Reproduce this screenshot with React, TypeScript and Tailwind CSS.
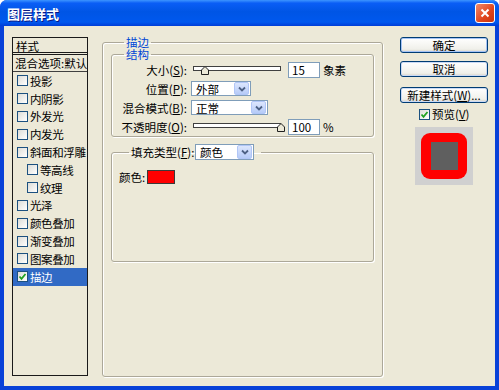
import React from "react";

const FONT = "font-['Noto_Sans_CJK_SC','Liberation_Sans',sans-serif]";

function CheckBox({ checked = false }: { checked?: boolean }) {
  return (
    <span className="w-[11px] h-[11px] shrink-0 border border-[#1c5180] bg-[linear-gradient(135deg,#dcdcd7,#ffffff)] flex items-center justify-center">
      {checked && (
        <svg width="9" height="9" viewBox="0 0 9 9">
          <polyline points="1.5,4.5 3.5,6.8 7.5,2" fill="none" stroke="#21a121" strokeWidth="1.8" />
        </svg>
      )}
    </span>
  );
}

function Dropdown({ value, w, h = 15 }: { value: string; w: string; h?: number }) {
  return (
    <div
      className={`${w} flex items-center bg-white border border-[#7f9db9] shrink-0`}
      style={{ height: h }}
    >
      <span className="flex-1 pl-[4px] leading-[12px] text-black">{value}</span>
      <span className="w-[15px] h-full mr-px border border-[#b1c6f7] rounded-[2px] bg-[linear-gradient(180deg,#dce6fd,#b6cbf8)] flex items-center justify-center">
        <svg width="8" height="6" viewBox="0 0 8 6">
          <polyline points="1,1.5 4,4.5 7,1.5" fill="none" stroke="#4d6185" strokeWidth="1.8" />
        </svg>
      </span>
    </div>
  );
}

function Slider({ pos }: { pos: number }) {
  return (
    <svg width="94" height="10" viewBox="0 0 94 10" className="shrink-0">
      <rect x="0.5" y="1.5" width="87" height="4" fill="#fff" stroke="#404040" />
      <polygon
        points={`${pos + 0.5},9.5 ${pos + 0.5},5 ${pos + 4},1.5 ${pos + 7.5},5 ${pos + 7.5},9.5`}
        fill="#ece9d8"
        stroke="#202020"
      />
    </svg>
  );
}

function TextBox({ value }: { value: string }) {
  return (
    <div className="w-[32px] h-[16px] ml-px bg-white border border-[#7f9db9] pl-[3px] leading-[14px] shrink-0">
      {value}
    </div>
  );
}

function XpButton({ children, focused = false }: { children: React.ReactNode; focused?: boolean }) {
  return (
    <div
      className={`h-[16px] w-[88px] rounded-[3px] border border-[#003c74] bg-[linear-gradient(180deg,#ffffff,#f0f0ea_80%,#d6d0c5)] flex items-center justify-center leading-[12px] text-black ${
        focused ? "shadow-[inset_0_0_0_1px_#a5c3f5]" : "shadow-[inset_0_0_0_1px_#cbdaf5]"
      }`}
    >
      {children}
    </div>
  );
}

const styles: { name: string; indent?: boolean; checked?: boolean; selected?: boolean }[] = [
  { name: "投影" },
  { name: "内阴影" },
  { name: "外发光" },
  { name: "内发光" },
  { name: "斜面和浮雕" },
  { name: "等高线", indent: true },
  { name: "纹理", indent: true },
  { name: "光泽" },
  { name: "颜色叠加" },
  { name: "渐变叠加" },
  { name: "图案叠加" },
  { name: "描边", checked: true, selected: true },
];

const groupBox =
  "border border-[#aca899] rounded-[3px] shadow-[inset_1px_1px_0_#ffffff,1px_1px_0_#ffffff]";

export default function App() {
  return (
    <div className={`${FONT} w-[499px] h-[390px] flex flex-col bg-[#0841d8] rounded-t-[7px] overflow-hidden`}>
      {/* title bar */}
      <div className="h-[26px] shrink-0 flex items-center justify-between pl-[7px] pr-[4px] bg-[linear-gradient(180deg,#3d95ff_0%,#0a5ef6_12%,#0055e5_45%,#0058ee_85%,#003dd7_100%)]">
        <span className="text-white font-bold text-[13px] leading-[13px] [text-shadow:1px_1px_0_#0a1883]">图层样式</span>
        <div className="w-[20px] h-[20px] rounded-[3px] border border-white bg-[linear-gradient(135deg,#f08a6c,#e0441c_60%,#c8340e)] flex items-center justify-center">
          <svg width="10" height="10" viewBox="0 0 10 10">
            <path d="M1.5 1.5 L8.5 8.5 M8.5 1.5 L1.5 8.5" stroke="#fff" strokeWidth="2" />
          </svg>
        </div>
      </div>

      {/* body */}
      <div className="flex-1 mx-[4px] mb-[4px] bg-[#ece9d8] flex items-start pl-[8px] pt-[11px] text-[11.5px] text-black">
        {/* style list */}
        <div className="w-[76px] h-[339px] border border-[#1a1a1a] shrink-0 flex flex-col overflow-hidden">
          <div className="h-[17px] pl-[3px] leading-[17px] border-b-[3px] border-double border-[#1a1a1a]">样式</div>
          <div className="h-[17px] pl-[2px] leading-[17px] border-b border-[#404040] whitespace-nowrap overflow-hidden">
            混合选项:默认
          </div>
          {styles.map((s) => (
            <div
              key={s.name}
              className={`h-[17.8px] flex items-center gap-[2px] whitespace-nowrap ${s.indent ? "pl-[14px]" : "pl-[4px]"} ${
                s.selected ? "bg-[#316ac5] text-white" : ""
              }`}
            >
              <CheckBox checked={s.checked} />
              <span className="leading-[12px] tracking-[-0.4px]">{s.name}</span>
            </div>
          ))}
        </div>

        {/* main stroke panel */}
        <fieldset className={`ml-[14px] w-[279px] h-[340px] px-[8px] shrink-0 ${groupBox}`}>
          <legend className="ml-[13px] px-[2px] text-[#0046d5] leading-[11px]">描边</legend>

          <fieldset className={`mt-px w-[263px] ${groupBox}`}>
            <legend className="ml-[12px] px-[2px] text-[#0046d5] leading-[11px]">结构</legend>
            <div className="h-[19px] flex items-center">
              <span className="w-[75px] text-right leading-[12px]">
                大小(<u>S</u>):
              </span>
              <span className="ml-[6px]">
                <Slider pos={8} />
              </span>
              <TextBox value="15" />
              <span className="ml-[3px] leading-[12px]">象素</span>
            </div>
            <div className="h-[19px] flex items-center">
              <span className="w-[75px] text-right leading-[12px]">
                位置(<u>P</u>):
              </span>
              <span className="ml-[4px]">
                <Dropdown value="外部" w="w-[60px]" />
              </span>
            </div>
            <div className="h-[19px] flex items-center">
              <span className="w-[75px] text-right leading-[12px]">
                混合模式(<u>B</u>):
              </span>
              <span className="ml-[4px]">
                <Dropdown value="正常" w="w-[77px]" />
              </span>
            </div>
            <div className="h-[19px] flex items-center">
              <span className="w-[75px] text-right leading-[12px]">
                不透明度(<u>O</u>):
              </span>
              <span className="ml-[6px]">
                <Slider pos={84} />
              </span>
              <TextBox value="100" />
              <span className="ml-[3px] leading-[12px]">%</span>
            </div>
          </fieldset>

          <fieldset className={`mt-[7px] w-[263px] h-[118px] ${groupBox}`}>
            <legend className="ml-[17px] pl-[2px] pr-[7px] flex items-center">
              <span className="w-[62px] leading-[12px] whitespace-nowrap">
                填充类型(<u>F</u>):
              </span>
              <span className="ml-[2px]">
                <Dropdown value="颜色" w="w-[59px]" h={16} />
              </span>
            </legend>
            <div className="mt-[10px] pl-[7px] flex items-center">
              <span className="leading-[12px] whitespace-nowrap">颜色:</span>
              <span className="ml-[2px] w-[28px] h-[14px] bg-[#ff0000] border border-[#3a3a3a]" />
            </div>
          </fieldset>
        </fieldset>

        {/* right buttons */}
        <div className="ml-[17px] w-[88px] flex flex-col shrink-0">
          <XpButton focused>确定</XpButton>
          <div className="mt-[8px]">
            <XpButton>取消</XpButton>
          </div>
          <div className="mt-[10px]">
            <XpButton>
              新建样式(<u>W</u>)...
            </XpButton>
          </div>
          <div className="mt-[5px] h-[12px] pl-[19px] flex items-center gap-[2px]">
            <CheckBox checked />
            <span className="leading-[12px] whitespace-nowrap">
              预览(<u>V</u>)
            </span>
          </div>
          <div className="mt-[7px] ml-[15px] w-[58px] h-[58px] bg-[#d0d0d0] flex items-center justify-center">
            <div className="w-[46px] h-[46px] rounded-[9px] bg-[#ff0000] flex items-center justify-center">
              <div className="w-[27px] h-[28px] bg-[#5f5f5f]" />
            </div>
          </div>
        </div>
      </div>
    </div>
  );
}
